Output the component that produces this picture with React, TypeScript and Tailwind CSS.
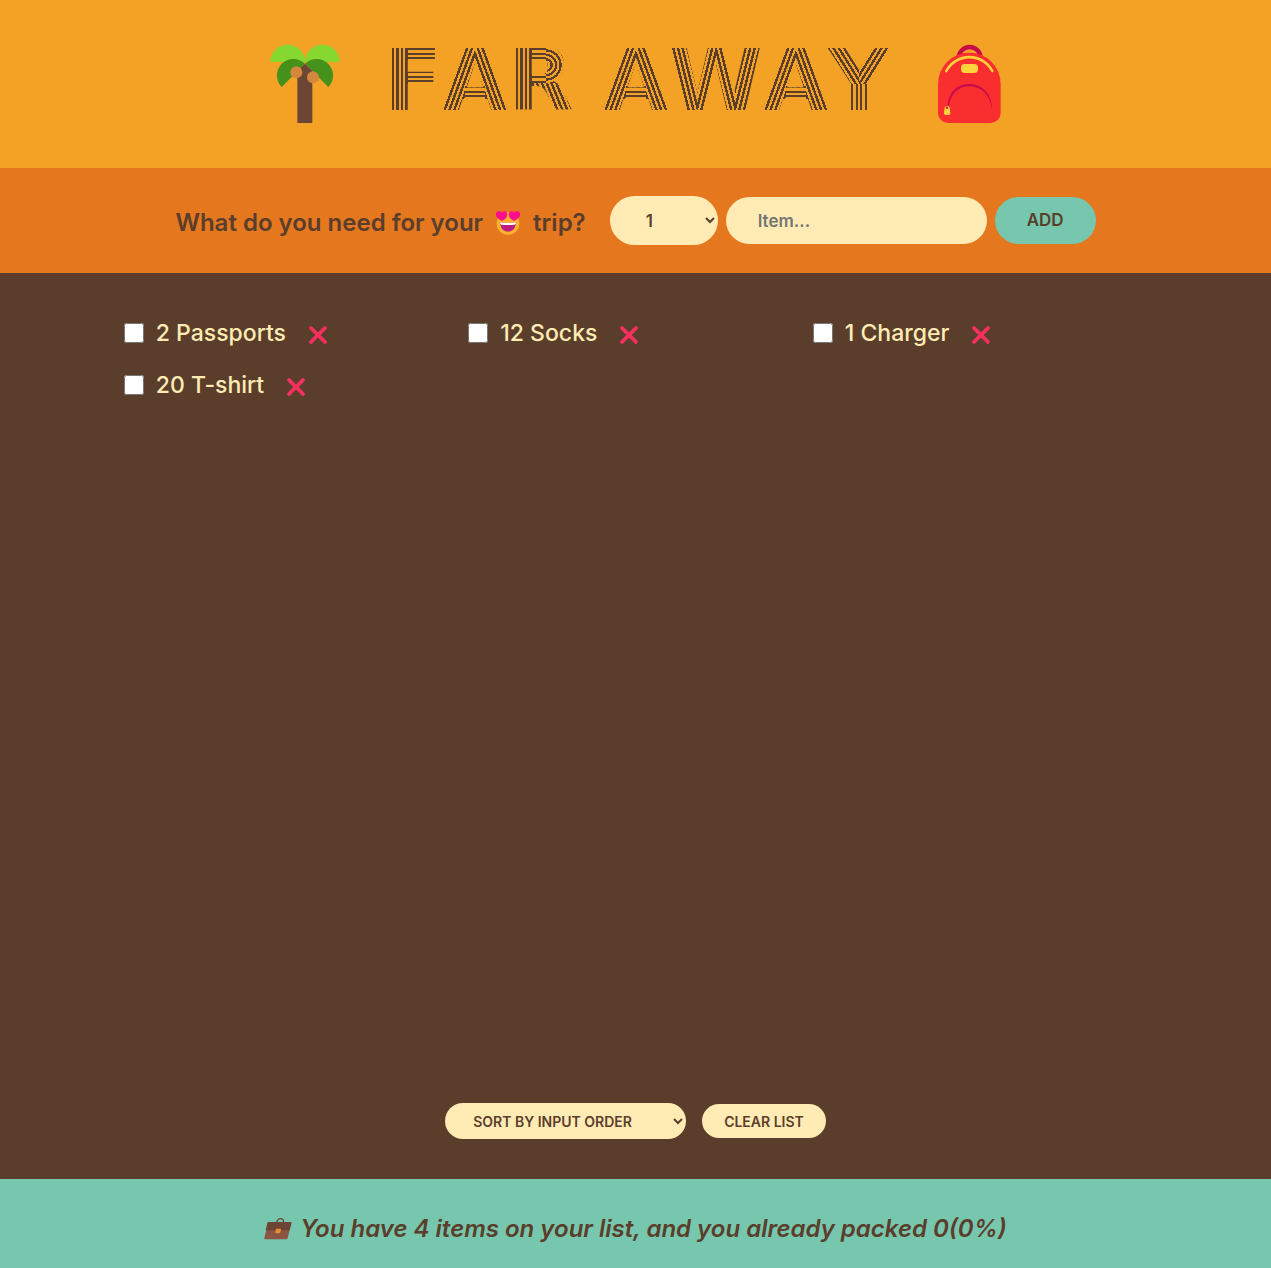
import { useState } from 'react';
import type { FormEvent } from 'react';

type Item = { id: number; description: string; quantity: number; packed: boolean };

const initialItems: Item[] = [
  { id: 1, description: 'Passports', quantity: 2, packed: false },
  { id: 2, description: 'Socks', quantity: 12, packed: false },
  { id: 3, description: 'Charger', quantity: 1, packed: false },
  { id: 4, description: 'T-shirt', quantity: 20, packed: false },
];

function PalmIcon() {
  return (
    <svg viewBox="60 42 208 240" className="h-20 w-[70px] shrink-0" aria-hidden="true">
      <path d="M60 96a52 52 0 0 1 104 0z" fill="#86d72f" />
      <path d="M164 96a52 52 0 0 1 104 0z" fill="#86d72f" />
      <path d="M94 171A49.5 49.5 0 0 1 164 101z" fill="#44911b" />
      <path d="M234 171A49.5 49.5 0 0 0 164 101z" fill="#44911b" />
      <path d="M141 279V124l23-23 22 22v156z" fill="#6d4534" />
      <circle cx="138" cy="127" r="18" fill="#d3883e" />
      <circle cx="188" cy="142" r="18" fill="#d3883e" />
    </svg>
  );
}

function BackpackIcon() {
  return (
    <svg viewBox="60 42 189 240" className="h-20 w-[63px] shrink-0" aria-hidden="true">
      <path d="M122 84a33 33 0 0 1 66 0" fill="none" stroke="#ca0b4a" strokeWidth="13" />
      <path d="M60 162a94 94 0 0 1 188 0v87a30 30 0 0 1-30 30H90a30 30 0 0 1-30-30z" fill="#f92f2f" />
      <path d="M85 123a78 78 0 0 1 138 0" fill="none" stroke="#ffd23b" strokeWidth="8" strokeLinecap="round" />
      <rect x="129" y="102" width="51" height="27" rx="11" fill="#ffd23b" />
      <path d="M88 228C92 184 120 162 154 162c38 0 69 30 68 76-5-42-33-69-68-69-31 0-56 21-62 59z" fill="#ca0b4a" />
      <path d="M80 233a8 9 0 0 1 15 0l2 17q0 5-5 5h-9q-5 0-5-5z" fill="#ffd23b" />
      <circle cx="87" cy="233" r="3.500" fill="#ca0b4a" />
    </svg>
  );
}

function HeartEyesIcon() {
  return (
    <svg viewBox="0 0 32 32" className="h-[26px] w-[26px] shrink-0" role="img" aria-label="heart eyes">
      <circle cx="16" cy="16.5" r="14" fill="#ffb02e" />
      <path d="M6.500 15q9.500 2 19 0c0 8-4 11.500-9.500 11.500S6.500 23 6.500 15z" fill="#bb1d80" />
      <path d="M6.500 15q9.500 2 19 0v1.500q0 1.200-1.500 1.500-8 1-16 0-1.500-.3-1.500-1.500z" fill="#fff" />
      <path d="M1.500 3.500C3 .8 6.500.6 8.200 3c2-2.200 5.800-1.900 6.600 1 1.300 4.500-2.500 7.500-5.800 9.300C5 12.500-.5 8.500 1.500 3.500z" fill="#ff0f8c" />
      <path d="M30.500 3.500C29 .8 25.500.6 23.800 3c-2-2.200-5.800-1.900-6.600 1-1.300 4.500 2.500 7.500 5.800 9.300 4-.8 9.500-4.800 7.500-9.800z" fill="#ff0f8c" />
    </svg>
  );
}

function BriefcaseIcon() {
  return (
    <svg viewBox="0 0 84 66" className="h-[22px] w-7 shrink-0" aria-hidden="true">
      <path d="M38 14c2-10 6-12 12-12s10 3 8 12" fill="none" stroke="#6d4534" strokeWidth="4" />
      <path d="M13 12h66q4 0 3 4L71 60q-1 4-5 4H4q-4 0-3-4z" fill="#8c5543" />
      <path d="M13 12h66q4 0 3 4l-5 21H5l5-22q1-3 3-3z" fill="#6d4534" />
      <path d="M36 32h14q2 0 1 3l-2 8q-1 3-4 3h-9q-3 0-2-3z" fill="#e88c30" />
    </svg>
  );
}

// Striped panels that show through the title's letters: x, y, width, height and stripe angle.
type Panel = { x: number; y: number; w: number; h: number; angle: number | 'bowl' };

const CAP_TOP = 10;
const CAP_HEIGHT = 62;

function letterA(x: number): Panel[] {
  return [
    { x: x + 23, y: CAP_TOP + 38, w: 20, h: 13, angle: 180 },
    { x, y: CAP_TOP, w: 33, h: CAP_HEIGHT, angle: 110 },
    { x: x + 33, y: CAP_TOP, w: 33, h: CAP_HEIGHT, angle: 70 },
  ];
}

const panels: Panel[] = [
  { x: 8, y: CAP_TOP, w: 16, h: CAP_HEIGHT, angle: 90 },
  { x: 24, y: CAP_TOP, w: 34, h: 18, angle: 180 },
  { x: 24, y: CAP_TOP + 23, w: 34, h: 20, angle: 180 },
  ...letterA(58),
  { x: 132, y: CAP_TOP, w: 16, h: CAP_HEIGHT, angle: 90 },
  { x: 148, y: CAP_TOP, w: 14, h: 17, angle: 180 },
  { x: 148, y: CAP_TOP + 17, w: 14, h: 18, angle: 0 },
  { x: 162, y: CAP_TOP, w: 27, h: 35, angle: 'bowl' },
  { x: 148, y: CAP_TOP + 35, w: 42, h: 27, angle: 68 },
  ...letterA(219),
  { x: 285, y: CAP_TOP, w: 28, h: CAP_HEIGHT, angle: 76 },
  { x: 313, y: CAP_TOP, w: 19, h: CAP_HEIGHT, angle: 104 },
  { x: 332, y: CAP_TOP, w: 19, h: CAP_HEIGHT, angle: 76 },
  { x: 351, y: CAP_TOP, w: 28, h: CAP_HEIGHT, angle: 104 },
  ...letterA(379),
  { x: 444, y: CAP_TOP, w: 31, h: 36, angle: 58 },
  { x: 475, y: CAP_TOP, w: 31, h: 36, angle: 122 },
  { x: 467, y: CAP_TOP + 36, w: 16, h: 27, angle: 90 },
];

function stripes(angle: Panel['angle']) {
  return angle === 'bowl'
    ? 'repeating-radial-gradient(circle at 0px 17px, #5a3e2b 0 2.2px, #f4a226 2.2px 4.5px)'
    : `repeating-linear-gradient(${angle}deg, #5a3e2b 0 2.4px, #f4a226 2.4px 4.5px)`;
}

const titleBackground = {
  backgroundImage: panels.map((p) => stripes(p.angle)).join(', '),
  backgroundPosition: panels.map((p) => `${p.x}px ${p.y}px`).join(', '),
  backgroundSize: panels.map((p) => `${p.w}px ${p.h}px`).join(', '),
};

function Logo() {
  return (
    <header className="flex h-[168px] items-center justify-center gap-12 bg-[#f4a226]">
      <PalmIcon />
      <h1
        style={titleBackground}
        className="-mt-2 -ml-1 bg-clip-text bg-no-repeat font-['DejaVu_Sans',sans-serif] text-[85px] leading-none font-bold whitespace-nowrap text-transparent uppercase [font-kerning:none]"
      >
        FAR AWAY
      </h1>
      <BackpackIcon />
    </header>
  );
}

function AddForm({ onAdd }: { onAdd: (item: Item) => void }) {
  const [description, setDescription] = useState('');
  const [quantity, setQuantity] = useState(1);

  function handleSubmit(event: FormEvent) {
    event.preventDefault();
    if (!description) return;
    onAdd({ id: Date.now(), description, quantity, packed: false });
    setDescription('');
    setQuantity(1);
  }

  return (
    <form onSubmit={handleSubmit} className="flex flex-wrap items-center justify-center gap-2 bg-[#e5771f] py-7">
      <h3 className="mr-4 flex items-center gap-3 pt-1 text-[24px] leading-[30px] font-semibold">
        What do you need for your <HeartEyesIcon /> trip?
      </h3>
      <select
        aria-label="Quantity"
        value={quantity}
        onChange={(event) => setQuantity(Number(event.target.value))}
        className="h-[49px] w-[108px] rounded-full bg-[#ffebb3] px-8 text-[17px] font-semibold"
      >
        {Array.from({ length: 20 }, (_, i) => i + 1).map((n) => (
          <option key={n} value={n}>{n}</option>
        ))}
      </select>
      <input
        type="text"
        aria-label="Item"
        placeholder="Item..."
        value={description}
        onChange={(event) => setDescription(event.target.value)}
        className="h-[47px] w-[261px] rounded-full bg-[#ffebb3] px-8 text-[17px] font-semibold placeholder:text-[#757575]"
      />
      <button type="submit" className="h-[47px] rounded-full bg-[#76c7ad] px-8 text-[17px] font-semibold uppercase">
        Add
      </button>
    </form>
  );
}

function ListItem({ item, onToggle, onDelete }: { item: Item; onToggle: (id: number) => void; onDelete: (id: number) => void }) {
  return (
    <li className="flex h-7 items-center gap-3">
      <input
        id={`item-${item.id}`}
        type="checkbox"
        checked={item.packed}
        onChange={() => onToggle(item.id)}
        className="ml-[3px] size-5"
      />
      <label htmlFor={`item-${item.id}`} className={item.packed ? 'line-through' : ''}>
        {item.quantity} {item.description}
      </label>
      <button type="button" aria-label={`Delete ${item.description}`} onClick={() => onDelete(item.id)} className="mt-1 ml-2.5">
        <svg viewBox="0 0 20 20" className="size-5" aria-hidden="true">
          <path d="M3 3l14 14M17 3L3 17" stroke="#f92f60" strokeWidth="3.800" strokeLinecap="round" />
        </svg>
      </button>
    </li>
  );
}

export default function App() {
  const [items, setItems] = useState(initialItems);
  const [sortBy, setSortBy] = useState('input');

  const sorted = items.slice();
  if (sortBy === 'description') sorted.sort((a, b) => a.description.localeCompare(b.description));
  if (sortBy === 'packed') sorted.sort((a, b) => Number(a.packed) - Number(b.packed));

  const packed = items.filter((item) => item.packed).length;
  const percentage = items.length ? Math.round((packed / items.length) * 100) : 0;

  return (
    <div className="flex min-h-screen flex-col bg-[#5a3e2b] font-['Inter',sans-serif] text-[#5a3e2b]">
      <Logo />
      <AddForm onAdd={(item) => setItems([...items, item])} />
      <main className="flex flex-1 flex-col items-center justify-between gap-8 pt-[46px] pb-10">
        <ul className="grid w-[81%] grid-cols-[repeat(auto-fit,minmax(300px,1fr))] gap-x-1 gap-y-6 text-[23px] leading-7 font-medium text-[#ffebb3]">
          {sorted.map((item) => (
            <ListItem
              key={item.id}
              item={item}
              onToggle={(id) => setItems(items.map((it) => (it.id === id ? { ...it, packed: !it.packed } : it)))}
              onDelete={(id) => setItems(items.filter((it) => it.id !== id))}
            />
          ))}
        </ul>
        <div className="flex flex-wrap items-center justify-center gap-4 text-[14px] font-semibold">
          <select
            aria-label="Sort items"
            value={sortBy}
            onChange={(event) => setSortBy(event.target.value)}
            className="h-9 w-[241px] rounded-full bg-[#ffebb3] px-6 uppercase"
          >
            <option value="input">Sort by input order</option>
            <option value="description">Sort by description</option>
            <option value="packed">Sort by packed status</option>
          </select>
          <button type="button" onClick={() => setItems([])} className="h-[34px] rounded-full bg-[#ffebb3] px-[22px] uppercase">
            Clear list
          </button>
        </div>
      </main>
      <footer className="flex items-center justify-center gap-2 bg-[#76c7ad] pt-[35px] pb-6 text-[24px] leading-[30px] font-semibold">
        <BriefcaseIcon />
        <em>
          You have {items.length} items on your list, and you already packed {packed}({percentage}%)
        </em>
      </footer>
    </div>
  );
}
